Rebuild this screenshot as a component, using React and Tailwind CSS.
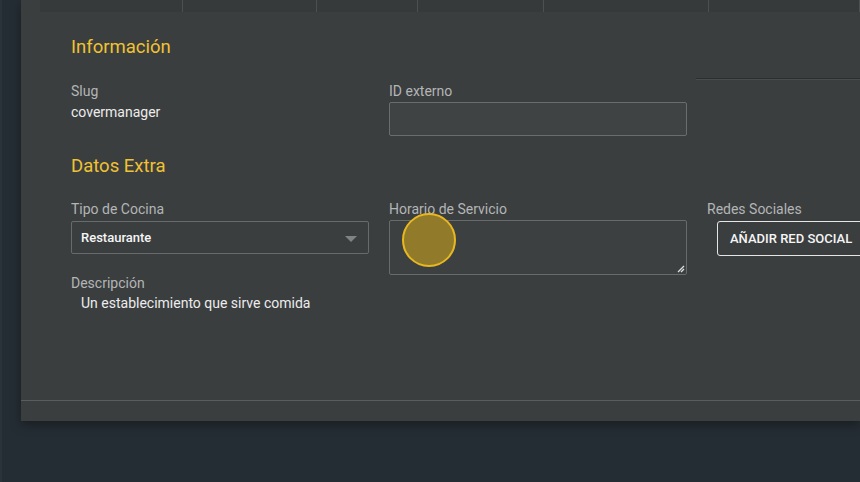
import React from 'react';

const cols = [143, 134, 101, 126, 165, 151];

export default function App() {
  return (
    <div className="w-[860px] h-[482px] bg-[#252d34] overflow-hidden relative" style={{ fontFamily: 'Roboto, "Liberation Sans", sans-serif' }}>
      <div className="absolute left-0 top-0 w-[2px] h-full bg-[#2b333a]" />
      <div className="ml-[21px] w-[839px] h-[421px] bg-[#3b3e3f] shadow-[0_4px_10px_rgba(0,0,0,0.35)] flex flex-col">
        {/* header cells strip */}
        <div className="ml-[19px] h-[12px] flex bg-[#373a3b]">
          {cols.map((w, i) => (
            <div key={i} className="h-full border-r border-[#4d5051] shrink-0" style={{ width: w }} />
          ))}
        </div>

        <div className="flex-1 relative pl-[50px] pt-[23px]">
          <div className="absolute right-0 top-[66px] w-[164px] h-[2px] border-t border-[#2c2f30] border-b border-b-[#4a4d4e]" />

          <h2 className="text-[18.5px] leading-[24px] text-[#f1c232]">Información</h2>

          <div className="flex mt-[23px]">
            <div className="w-[318px] shrink-0">
              <div className="text-[14px] leading-[18px] text-[#b3b5b6]">Slug</div>
              <div className="text-[14px] leading-[18px] text-[#ececec] mt-[3px]">covermanager</div>
            </div>
            <div className="w-[298px] shrink-0">
              <div className="text-[14px] leading-[18px] text-[#b3b5b6]">ID externo</div>
              <div className="mt-[2px] h-[34px] border border-[#6a6d6e] rounded-[2px] bg-[#404344]" />
            </div>
          </div>

          <h2 className="text-[18.5px] leading-[24px] text-[#f1c232] mt-[18px]">Datos Extra</h2>

          <div className="flex mt-[22px]">
            <div className="w-[318px] shrink-0">
              <div className="text-[14px] leading-[18px] text-[#b3b5b6]">Tipo de Cocina</div>
              <div className="mt-[3px] w-[298px] h-[33px] border border-[#686b6c] rounded-[2px] flex items-center justify-between pl-[9px] pr-[11px]">
                <span className="text-[13px] font-medium text-[#f5f5f5]">Restaurante</span>
                <svg width="12" height="7" viewBox="0 0 12 7" className="mt-[3px]"><path d="M0 0h12L6 6z" fill="#808384" /></svg>
              </div>
              <div className="text-[14px] leading-[18px] text-[#b3b5b6] mt-[20px]">Descripción</div>
              <div className="text-[14px] leading-[18px] text-[#ececec] mt-[2px] pl-[10px]">Un establecimiento que sirve comida</div>
            </div>
            <div className="w-[318px] shrink-0">
              <div className="text-[14px] leading-[18px] text-[#b3b5b6]">Horario de Servicio</div>
              <div className="relative mt-[2px] w-[298px] h-[55px] border border-[#686b6c] rounded-[2px] bg-[#3d4041]">
                <svg width="8" height="8" viewBox="0 0 8 8" className="absolute right-[1px] bottom-[1px]">
                  <path d="M7 1L1 7M7 4L4 7" stroke="#e0e0e0" strokeWidth="1.3" />
                </svg>
              </div>
            </div>
            <div className="flex-1">
              <div className="text-[14px] leading-[18px] text-[#b3b5b6]">Redes Sociales</div>
              <button className="mt-[3px] ml-[10px] h-[35px] w-[160px] border border-[#e6e6e6] rounded-[3px] text-left pl-[12px] text-[13px] font-medium text-[#f5f5f5] whitespace-nowrap">
                AÑADIR RED SOCIAL
              </button>
            </div>
          </div>

          <div className="absolute left-[381px] top-[201px] w-[54px] h-[54px] rounded-full bg-[#917a2a] border-2 border-[#e8b820]" />
        </div>

        <div className="h-[21px] border-t border-[#5a5d5e]" />
      </div>
    </div>
  );
}
